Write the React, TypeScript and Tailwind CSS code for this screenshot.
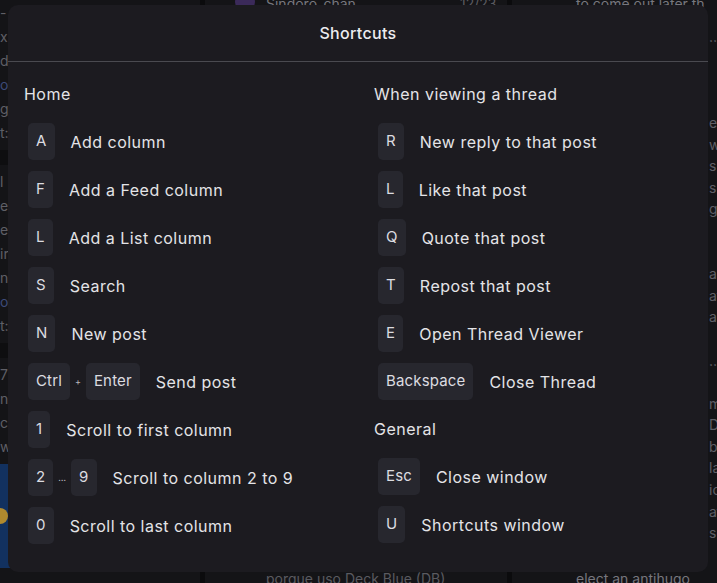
import React from 'react';

type Shortcut = { keys: string[]; sep?: string; label: string };

const home: Shortcut[] = [
  { keys: ['A'], label: 'Add column' },
  { keys: ['F'], label: 'Add a Feed column' },
  { keys: ['L'], label: 'Add a List column' },
  { keys: ['S'], label: 'Search' },
  { keys: ['N'], label: 'New post' },
  { keys: ['Ctrl', 'Enter'], sep: '+', label: 'Send post' },
  { keys: ['1'], label: 'Scroll to first column' },
  { keys: ['2', '9'], sep: '…', label: 'Scroll to column 2 to 9' },
  { keys: ['0'], label: 'Scroll to last column' },
];

const thread: Shortcut[] = [
  { keys: ['R'], label: 'New reply to that post' },
  { keys: ['L'], label: 'Like that post' },
  { keys: ['Q'], label: 'Quote that post' },
  { keys: ['T'], label: 'Repost that post' },
  { keys: ['E'], label: 'Open Thread Viewer' },
  { keys: ['Backspace'], label: 'Close Thread' },
];

const general: Shortcut[] = [
  { keys: ['Esc'], label: 'Close window' },
  { keys: ['U'], label: 'Shortcuts window' },
];

function Key({ k }: { k: string }) {
  return (
    <span className="h-[37px] px-2 flex items-center rounded-[5px] bg-[#27272e] text-[15px] text-[#dcdce0] tracking-[0.01em]">
      {k}
    </span>
  );
}

function Row({ s }: { s: Shortcut }) {
  return (
    <div className="flex items-center h-[37px] pl-1">
      <div className="flex items-center">
        {s.keys.map((k, i) => (
          <React.Fragment key={k}>
            {i > 0 && (
              <span className="px-[5px] text-[9px] text-[#b8b8bd]">{s.sep}</span>
            )}
            <Key k={k} />
          </React.Fragment>
        ))}
      </div>
      <span className="ml-4 text-[16px] text-[#e4e4e7] tracking-[0.03em]">{s.label}</span>
    </div>
  );
}

function Section({ title, items, className = '' }: { title: string; items: Shortcut[]; className?: string }) {
  return (
    <div className={className}>
      <div className="h-6 leading-6 text-[16px] text-[#e4e4e7] tracking-[0.03em]">{title}</div>
      <div className="mt-[17px] flex flex-col gap-[11px]">
        {items.map((s) => (
          <Row key={s.label} s={s} />
        ))}
      </div>
    </div>
  );
}

// bits of the deck columns that peek out round the modal
const leftPosts = [
  ['-', 'x.', 'd', 'ol', 'g', 't:'],
  ['l', 'er', 'ei', 'ir', 'n', 'ol', 't:'],
  ['7', 'nl', 'c', 'w'],
];

const rightLines = [
  '', '…', '', '', '', 'et', 'w', 's.', 'sh', 'g', '', '', 'a', 'at', 'a', '', '…', '', 'm', 'D', 'b', 'la', 'ic', 'at', 'sc',
];

export default function App() {
  return (
    <div
      className="relative w-full h-[583px] overflow-hidden bg-[#141417]"
      style={{ fontFamily: 'Inter, "Noto Sans", sans-serif' }}
    >
      <div className="flex h-full text-[14px] text-[#5f5f66]">
        <div className="w-[200px] shrink-0 flex flex-col pt-[1px]">
          {leftPosts.map((p, i) => (
            <div key={i} className="flex flex-col">
              <div className="flex flex-col pb-[5px]">
                {p.map((t, j) => (
                  <span key={j} className={t === 'ol' ? 'text-[#3d4a78] leading-6' : 'leading-6'}>
                    {t}
                  </span>
                ))}
              </div>
              {i < leftPosts.length - 1 && <div className="h-[15px] bg-[#0e0e10] mb-[5px]" />}
            </div>
          ))}
          <div className="h-[104px] bg-[#12315f] flex items-center">
            <div className="w-4 h-4 -ml-2 rounded-full bg-[#b08a2e]" />
          </div>
        </div>
        <div className="w-[5px] shrink-0 bg-[#0b0b0d]" />
        <div className="w-[302px] shrink-0 relative">
          <div className="absolute left-[30px] top-[-8px] w-5 h-5 rounded-full bg-[#3b2a5a]" />
          <div className="absolute left-[61px] top-[-7px] text-[#77777e]">Sindoro_chan</div>
          <div className="absolute left-[255px] top-[-7px] text-[#5a5a60]">12/23</div>
          <div className="absolute left-[61px] bottom-[-6px] text-[#5a5a60]">porque uso Deck Blue (DB)</div>
        </div>
        <div className="w-[5px] shrink-0 bg-[#0b0b0d]" />
        <div className="flex-1 min-w-0 relative">
          <div className="absolute left-[64px] top-[-7px] text-[#77777e] whitespace-nowrap">to come out later th</div>
          <div className="absolute left-[64px] bottom-[-6px] text-[#77777e] whitespace-nowrap">elect an antihugo</div>
          <div className="flex flex-col pl-[197px] pt-[4px]">
            {rightLines.map((t, i) => (
              <span key={i} className="h-[21.6px] leading-[21.6px] whitespace-nowrap">{t}</span>
            ))}
          </div>
        </div>
      </div>

      {/* shortcuts modal */}
      <div className="absolute left-2 top-[5px] w-[700px] h-[567px] rounded-[10px] bg-[#1c1b20]">
        <div className="h-[57px] flex items-center justify-center border-b border-[#4a4a50]">
          <span className="text-[16px] font-medium text-[#ececef] tracking-[0.02em]">Shortcuts</span>
        </div>
        <div className="grid grid-cols-2 pt-5">
          <div className="px-4">
            <Section title="Home" items={home} />
          </div>
          <div className="px-4">
            <Section title="When viewing a thread" items={thread} />
            <Section title="General" items={general} className="mt-[17px]" />
          </div>
        </div>
      </div>
    </div>
  );
}
